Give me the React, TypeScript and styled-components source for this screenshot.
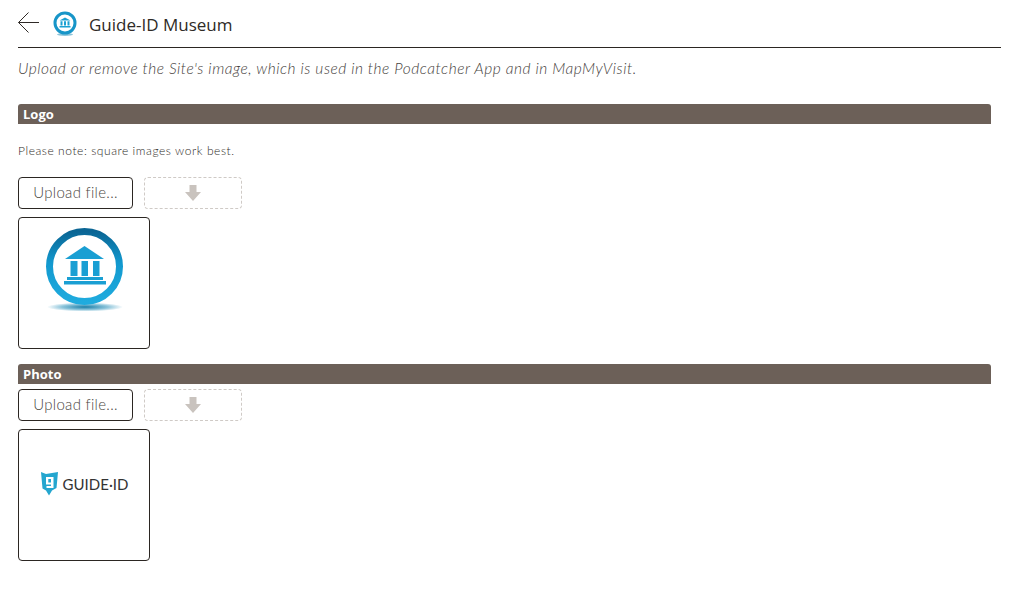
import React from "react";
import styled, { createGlobalStyle } from "styled-components";

const Global = createGlobalStyle`
  html, body { margin: 0; padding: 0; background: #fff; }
  body { font-family: Lato, "Open Sans", sans-serif; color: #2e2a26; }
  * { box-sizing: border-box; }
`;

const Page = styled.div`
  width: 1014px;
  height: 597px;
  padding: 0 13px 0 18px;
  overflow: hidden;
`;

const Header = styled.header`
  height: 48px;
  display: flex;
  align-items: center;
  border-bottom: 1px solid #2b2622;
`;

const BackButton = styled.span`
  display: flex;
  width: 34px;
  height: 24px;
  margin-top: -2px;
`;

const HeaderLogo = styled.span`
  display: flex;
  width: 26px;
  height: 26px;
  margin-right: 11px;
`;

const Title = styled.h1`
  margin: 0;
  padding-top: 3px;
  font-family: "Open Sans", sans-serif;
  font-size: 17px;
  line-height: 22px;
  font-weight: 500;
  color: #2e2a26;
`;

const Description = styled.p`
  margin: 0;
  height: 56px;
  padding-top: 10px;
  font-size: 15.5px;
  line-height: 20px;
  font-style: italic;
  font-weight: 300;
  letter-spacing: 0.52px;
  color: #474340;
`;

const SectionBar = styled.h2`
  width: 973px;
  height: 20px;
  margin: 0;
  padding-left: 5px;
  background: #6c6058;
  border-radius: 3px 3px 0 0;
  color: #fff;
  font-family: "Open Sans", sans-serif;
  font-size: 13px;
  line-height: 20px;
  font-weight: 700;
`;

const Note = styled.p`
  margin: 0;
  height: 53px;
  padding-top: 19px;
  font-size: 12px;
  line-height: 16px;
  font-weight: 300;
  letter-spacing: 0.56px;
  color: #2e2a26;
`;

const Actions = styled.div<{ $top?: number }>`
  display: flex;
  gap: 11px;
  padding-top: ${(p) => p.$top ?? 0}px;
`;

const UploadButton = styled.button`
  width: 115px;
  height: 32px;
  padding: 0 0 2px;
  background: #fff;
  border: 1px solid #2b2622;
  border-radius: 4px;
  color: #4a4642;
  font-family: Lato, sans-serif;
  font-size: 15px;
  font-weight: 300;
  letter-spacing: 0.3px;
`;

const RemoveButton = styled.button`
  width: 98px;
  height: 32px;
  padding: 0;
  display: flex;
  align-items: center;
  justify-content: center;
  background: #fff;
  border: 1px dashed #cfcac6;
  border-radius: 4px;
`;

const ImageBox = styled.div<{ $bottom?: number }>`
  width: 132px;
  height: 132px;
  margin-top: 8px;
  margin-bottom: ${(p) => p.$bottom ?? 0}px;
  display: flex;
  align-items: center;
  justify-content: center;
  background: #fff;
  border: 1px solid #2b2622;
  border-radius: 4px;
`;

const GuideLogo = styled.div`
  display: flex;
  align-items: center;
  gap: 4px;
  margin-bottom: 23px;
  margin-left: 2px;
`;

const GuideText = styled.span`
  font-family: Lato, sans-serif;
  font-size: 15px;
  font-weight: 400;
  letter-spacing: 0.05px;
  color: #333;
`;

const Museum = ({ size }: { size: number }) => (
  <svg width={size} height={size} viewBox="0 0 130 130">
    <defs>
      <linearGradient id="ring" x1="0" y1="0" x2="0" y2="1">
        <stop offset="0" stopColor="#0a6594" />
        <stop offset="0.45" stopColor="#1299cf" />
        <stop offset="1" stopColor="#1fabde" />
      </linearGradient>
      <radialGradient id="shade">
        <stop offset="0" stopColor="#1b7fa8" />
        <stop offset="0.6" stopColor="#8cc4da" />
        <stop offset="1" stopColor="#ffffff" />
      </radialGradient>
    </defs>
    <ellipse cx="66" cy="89" rx="38" ry="4.500" fill="url(#shade)" />
    <circle cx="65.500" cy="48.500" r="35" fill="#fff" stroke="url(#ring)" strokeWidth="7" />
    <path d="M65.500 28 L85 41 H46 Z" fill="#1a9fd3" />
    <path d="M51.500 43h7v15h-7zM62.500 43h6.500v15h-6.500zM74 43h6.500v15H74z" fill="#1a9fd3" />
    <path d="M48 59h36v3H48zM45 63h42v3.500H45z" fill="#1a9fd3" />
  </svg>
);

const SmallMuseum = () => (
  <svg width="26" height="26" viewBox="0 0 26 26">
    <ellipse cx="13" cy="23.500" rx="8" ry="1.500" fill="#8cc4da" />
    <circle cx="13" cy="12" r="10" fill="#fff" stroke="#1795c8" strokeWidth="3" />
    <path d="M13 6.500l5.500 3h-11zM8.500 10.200h2v4.300h-2zM12 10.200h2v4.300h-2zM15.500 10.200h2v4.300h-2zM7.500 15h11v1.600h-11z" fill="#1ba0d2" />
  </svg>
);

const DownArrow = () => (
  <svg width="16" height="16" viewBox="0 0 16 16">
    <path d="M4.500 0h7v7H16L8 16 0 7h4.500z" fill="#c9c3be" />
  </svg>
);

const BackArrow = () => (
  <svg width="24" height="24" viewBox="0 0 24 24" fill="none" stroke="#2f2a27" strokeWidth="1">
    <path d="M21 11.500H0.500M10.500 1.500 0.500 11.500l10 10" />
  </svg>
);

const GuideMark = () => (
  <svg width="17" height="24" viewBox="0 0 17 24">
    <path d="M0 0l5 2 6-1 6-1-1.500 16-4.500 2.500-3 5-3-5-3.500-2z" fill="#24a6cf" />
    <path d="M5 5h7.500v11H5.500v-2h4.500v-1.500H5zM7.300 7v3.500h2.700V7z" fill="#fff" fillRule="evenodd" />
  </svg>
);

const ActionsRow = ({ top }: { top?: number }) => (
  <Actions $top={top}>
    <UploadButton>Upload file...</UploadButton>
    <RemoveButton aria-label="Remove"><DownArrow /></RemoveButton>
  </Actions>
);

export default function App() {
  return (
    <Page>
      <Global />
      <Header>
        <BackButton><BackArrow /></BackButton>
        <HeaderLogo><SmallMuseum /></HeaderLogo>
        <Title>Guide-ID Museum</Title>
      </Header>
      <Description>Upload or remove the Site's image, which is used in the Podcatcher App and in MapMyVisit.</Description>
      <SectionBar>Logo</SectionBar>
      <Note>Please note: square images work best.</Note>
      <ActionsRow />
      <ImageBox $bottom={15}><Museum size={130} /></ImageBox>
      <SectionBar>Photo</SectionBar>
      <ActionsRow top={5} />
      <ImageBox>
        <GuideLogo>
          <GuideMark />
          <GuideText>GUIDE·ID</GuideText>
        </GuideLogo>
      </ImageBox>
    </Page>
  );
}
